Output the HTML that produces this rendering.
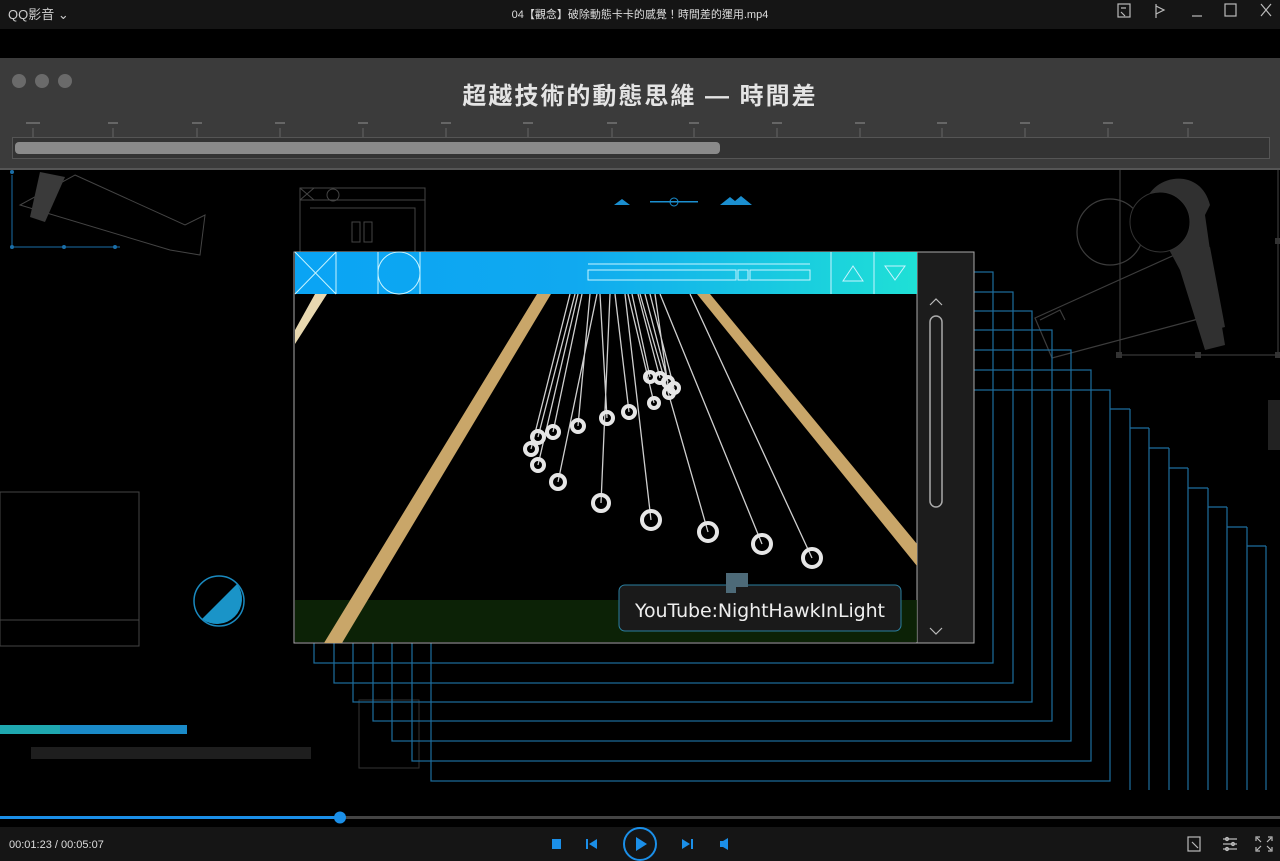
<!DOCTYPE html>
<html><head><meta charset="utf-8">
<style>
html,body{margin:0;padding:0;width:1280px;height:861px;overflow:hidden;background:#000;font-family:"Liberation Sans","Noto Sans CJK TC",sans-serif;}
.top{position:absolute;left:0;top:0;width:1280px;height:29px;background:#151515;color:#ccc;font-size:12px;}
.bot{position:absolute;left:0;top:827px;width:1280px;height:34px;background:#151515;}
</style></head><body>
<div class="top">
  <div style="position:absolute;left:8px;top:4px;font-size:13px;color:#ccc">QQ影音 ⌄</div>
  <div style="position:absolute;left:0;width:1280px;top:6px;text-align:center;font-size:11px;color:#ddd">04【觀念】破除動態卡卡的感覺！時間差的運用.mp4</div>
  <svg style="position:absolute;left:1110px;top:0" width="170" height="29" fill="none" stroke="#bbb" stroke-width="1.2">
    <rect x="8" y="4" width="12" height="13"/><path d="M11 8h5M11 12l4 4"/>
    <path d="M46 4v14M46 6l8 4-8 4"/>
    <path d="M82 16h10"/>
    <rect x="115" y="4" width="11" height="12"/>
    <path d="M151 4l10 12M161 4l-10 12"/>
  </svg>
</div>
<div style="position:absolute;left:0;top:58px;width:1280px;height:110px;background:#3b3b3b;border-bottom:2px solid #555"></div>
<div style="position:absolute;left:12px;top:74px;width:14px;height:14px;border-radius:50%;background:#6a6a6a"></div>
<div style="position:absolute;left:35px;top:74px;width:14px;height:14px;border-radius:50%;background:#6a6a6a"></div>
<div style="position:absolute;left:58px;top:74px;width:14px;height:14px;border-radius:50%;background:#6a6a6a"></div>
<div style="position:absolute;left:0;width:1280px;top:76px;text-align:center;font-size:24px;font-weight:bold;color:#e4e4e4;letter-spacing:2px">超越技術的動態思維 — 時間差</div>
<div style="position:absolute;left:12px;top:137px;width:1256px;height:20px;border:1px solid #555;background:#333"></div>
<div style="position:absolute;left:15px;top:142px;width:705px;height:12px;border-radius:4px;background:#8a8a8a"></div>
<svg style="position:absolute;left:0;top:118px" width="1280" height="20" stroke="#666" stroke-width="1">
  <path d="M33 10v9M113 10v9M197 10v9M280 10v9M363 10v9M446 10v9M528 10v9M612 10v9M694 10v9M777 10v9M860 10v9M942 10v9M1025 10v9M1108 10v9M1188 10v9"/>
  <g fill="#666" stroke="none"><rect x="26" y="4" width="14" height="2"/><rect x="108" y="4" width="10" height="2"/><rect x="192" y="4" width="10" height="2"/><rect x="275" y="4" width="10" height="2"/><rect x="358" y="4" width="10" height="2"/><rect x="441" y="4" width="10" height="2"/><rect x="523" y="4" width="10" height="2"/><rect x="607" y="4" width="10" height="2"/><rect x="689" y="4" width="10" height="2"/><rect x="772" y="4" width="10" height="2"/><rect x="855" y="4" width="10" height="2"/><rect x="937" y="4" width="10" height="2"/><rect x="1020" y="4" width="10" height="2"/><rect x="1103" y="4" width="10" height="2"/><rect x="1183" y="4" width="10" height="2"/></g>
</svg>
<svg style="position:absolute;left:0;top:170px" width="1280" height="657" viewBox="0 170 1280 657">
  <g fill="none" stroke="#444" stroke-width="1">
    <path d="M75 175l110 50 20-10-5 40-30-5-150-45z"/>
    <path d="M300 188h125v70H300z"/><path d="M300 200h125"/><path d="M310 208h105v50"/><rect x="352" y="222" width="8" height="20"/><rect x="364" y="222" width="8" height="20"/>
    <path d="M300 188l14 12M314 188l-14 12"/><circle cx="333" cy="195" r="6"/>
    <rect x="0" y="492" width="139" height="154"/><path d="M0 620h139"/>
    <path d="M1120 170v185h160M1278 170v185"/>
  </g>
  <path d="M40 172l25 5-20 45-15-5z" fill="#3a3a3a"/>
  <!-- right camera -->
  <g fill="none" stroke="#3c3c3c" stroke-width="1.2">
    <circle cx="1110" cy="232" r="33"/>
    <path d="M1035 318l155-70 12 70-150 40z"/>
    <path d="M1040 320l20-10 5 10"/>
  </g>
  <path d="M1145 205c5-30 55-40 65 0l-5 10 10 70 10 60-20 5-25-80z" fill="#303030"/>
  <circle cx="1160" cy="222" r="30" fill="#000" stroke="#333"/>
  <path d="M1185 255l25-8 15 80-20 5z" fill="#303030"/>
  <g fill="#333"><rect x="1116" y="352" width="6" height="6"/><rect x="1195" y="352" width="6" height="6"/><rect x="1275" y="352" width="5" height="6"/><rect x="1275" y="238" width="5" height="6"/></g>
  <path d="M12 175v72h108" fill="none" stroke="#1a6ea8" stroke-width="1"/>
  <g fill="#1a6ea8"><circle cx="12" cy="172" r="2"/><circle cx="12" cy="247" r="2"/><circle cx="64" cy="247" r="2"/><circle cx="115" cy="247" r="2"/></g>
  <g fill="#1b8fd0"><path d="M614 205l8-6 8 6z"/><path d="M720 205l10-8 5 4 6-5 11 9z"/><rect x="650" y="201" width="48" height="1.5"/><circle cx="674" cy="202" r="4" fill="none" stroke="#1b8fd0"/></g>
  <circle cx="219" cy="601" r="25" fill="none" stroke="#1a8ac0" stroke-width="1.5"/>
  <path d="M237 584A25 25 0 0 1 202 619z" fill="#1a94c8"/>
  <rect x="0" y="725" width="187" height="9" fill="#1a8ac8"/>
  <rect x="0" y="725" width="60" height="9" fill="#1fa8b0"/>
  <rect x="31" y="747" width="280" height="12" fill="#1e1e1e"/>
  <rect x="359" y="700" width="60" height="68" fill="none" stroke="#333"/>
  <g fill="none" stroke="#1d6e9e" stroke-width="1.2">
    <rect x="314" y="272" width="679" height="391"/>
    <rect x="334" y="292" width="679" height="391"/>
    <rect x="353" y="311" width="679" height="391"/>
    <rect x="373" y="330" width="679" height="391"/>
    <rect x="392" y="350" width="679" height="391"/>
    <rect x="412" y="370" width="679" height="391"/>
    <rect x="431" y="390" width="679" height="391"/>
    <path d="M1130 409v381M1110 409h20M1149 428v362M1130 428h19M1169 448v342M1149 448h20M1188 468v322M1169 468h19M1208 488v302M1188 488h20M1227 507v283M1208 507h19M1247 527v263M1227 527h20M1266 546v244M1247 546h19"/>
  </g>
  <rect x="1268" y="400" width="12" height="50" fill="#222"/>
  <rect x="294" y="252" width="680" height="391" fill="#000" stroke="#aaa"/>
  <rect x="917" y="252" width="57" height="391" fill="#1c1c1c" stroke="#aaa"/>
  <defs><linearGradient id="g" x1="0" x2="1"><stop offset="0" stop-color="#0aa4f4"/><stop offset=".45" stop-color="#10a9f0"/><stop offset="1" stop-color="#1fe0d6"/></linearGradient></defs>
  <rect x="295" y="252" width="622" height="42" fill="url(#g)"/>
  <g fill="none" stroke="#c8f4ff" stroke-width="1">
    <path d="M336 252v42M378 252v42M420 252v42M295 252l41 42M336 252l-41 42"/>
    <circle cx="399" cy="273" r="21"/>
    <path d="M588 264h222"/><rect x="588" y="270" width="148" height="10"/><rect x="738" y="270" width="10" height="10"/><rect x="750" y="270" width="60" height="10"/>
    <path d="M831 252v42M874 252v42"/>
    <path d="M843 281l10-15 10 15z"/><path d="M885 266h20l-10 14z"/>
  </g>
  <rect x="295" y="600" width="622" height="42" fill="#0f2a08" opacity=".8"/>
  <path d="M295 330l20-36h12l-32 50z" fill="#e8d8b0"/>
  <path d="M537 294h14L342 643h-18z" fill="#c9a669"/>
  <path d="M697 294h13l207 250v22z" fill="#c9a669"/>
  <g stroke="#cfcfcf" stroke-width="1.3" fill="none">
    <path d="M570 294L531 449M575 294L538 437M582 294L553 432M590 294L578 426M600 294L607 418M615 294L629 412M578 294L538 465M597 294L558 482M610 294L601 503M625 294L651 520M640 294L708 532M660 294L762 544M690 294L812 558M632 294L650 377M638 294L660 378M645 294L668 382M650 294L674 388M628 294L654 403M655 294L669 393"/>
  </g>
  <g stroke="#e6e6e6" stroke-width="4" fill="none">
    <circle cx="531" cy="449" r="6"/><circle cx="538" cy="437" r="6"/><circle cx="553" cy="432" r="6"/><circle cx="578" cy="426" r="6"/><circle cx="607" cy="418" r="6"/><circle cx="629" cy="412" r="6"/><circle cx="538" cy="465" r="6"/><circle cx="558" cy="482" r="7"/><circle cx="601" cy="503" r="8"/><circle cx="651" cy="520" r="9"/><circle cx="708" cy="532" r="9"/><circle cx="762" cy="544" r="9"/><circle cx="812" cy="558" r="9"/><circle cx="650" cy="377" r="5"/><circle cx="660" cy="378" r="5"/><circle cx="668" cy="382" r="5"/><circle cx="674" cy="388" r="5"/><circle cx="654" cy="403" r="5"/><circle cx="669" cy="393" r="5"/>
  </g>
  <rect x="619" y="585" width="282" height="46" rx="6" fill="#1a1a1a" stroke="#2a7fa0"/>
  <path d="M726 573h22v14h-12v6h-10z" fill="#4d6a78"/>
  <text x="760" y="617" text-anchor="middle" font-size="19" fill="#eee" font-family="DejaVu Sans,sans-serif" textLength="250">YouTube:NightHawkInLight</text>
  <path d="M930 305l6-6 6 6M930 628l6 6 6-6" fill="none" stroke="#bbb" stroke-width="1.2"/>
  <rect x="930" y="316" width="12" height="191" rx="6" fill="none" stroke="#aaa" stroke-width="1.5"/>
  <rect x="0" y="816" width="1280" height="3" fill="#444"/>
  <rect x="0" y="816" width="340" height="3" fill="#1b8fe8"/>
  <circle cx="340" cy="817.5" r="6" fill="#1b8fe8"/>
</svg>
<div class="bot">
  <div style="position:absolute;left:9px;top:12px;font-size:11px;color:#ddd">00:01:23 / 00:05:07</div>
  <svg style="position:absolute;left:540px;top:0" width="200" height="34" fill="#1b8fe8">
    <rect x="12" y="12" width="9" height="10"/>
    <rect x="46" y="12" width="2" height="10"/><path d="M57 12v10l-8-5z"/>
    <circle cx="100" cy="17" r="16" fill="none" stroke="#1b8fe8" stroke-width="2"/><path d="M96 10v14l11-7z"/>
    <path d="M142 12v10l8-5z"/><rect x="151" y="12" width="2" height="10"/>
    <path d="M180 14h3l5-3v12l-5-3h-3z"/>
  </svg>
  <svg style="position:absolute;left:1180px;top:8px" width="100" height="20" fill="none" stroke="#bbb" stroke-width="1.2">
    <rect x="8" y="2" width="12" height="14"/><path d="M12 7l6 6"/>
    <path d="M43 4h14M43 9h14M43 14h14"/><circle cx="47" cy="4" r="1.5"/><circle cx="53" cy="9" r="1.5"/><circle cx="47" cy="14" r="1.5"/>
    <path d="M80 2h-4v4M88 2h4v4M80 16h-4v-4M88 16h4v-4M77 3l4 4M91 3l-4 4M77 15l4-4M91 15l-4-4"/>
  </svg>
</div>
</body></html>
